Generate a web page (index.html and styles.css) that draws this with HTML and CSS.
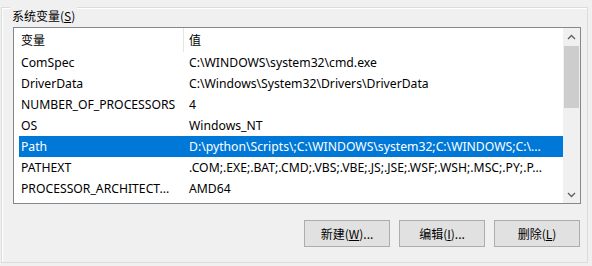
FILE: index.html
```html
<!DOCTYPE html>
<html>
<head>
<meta charset="utf-8">
<link rel="stylesheet" href="styles.css">
</head>
<body>
<div class="group">
  <div class="legend">系统变量(<u>S</u>)</div>
  <div class="listbox">
    <div class="list">
      <div class="header">
        <div class="hcell hname">变量</div>
        <div class="hcell hval">值</div>
      </div>
      <div class="row"><div class="cname">ComSpec</div><div class="cval">C:\WINDOWS\system32\cmd.exe</div></div>
      <div class="row"><div class="cname">DriverData</div><div class="cval">C:\Windows\System32\Drivers\DriverData</div></div>
      <div class="row"><div class="cname">NUMBER_OF_PROCESSORS</div><div class="cval">4</div></div>
      <div class="row"><div class="cname">OS</div><div class="cval">Windows_NT</div></div>
      <div class="row selected"><div class="cname">Path</div><div class="cval">D:\python\Scripts\;C:\WINDOWS\system32;C:\WINDOWS;C:\...</div></div>
      <div class="row"><div class="cname">PATHEXT</div><div class="cval">.COM;.EXE;.BAT;.CMD;.VBS;.VBE;.JS;.JSE;.WSF;.WSH;.MSC;.PY;.P...</div></div>
      <div class="row"><div class="cname">PROCESSOR_ARCHITECT...</div><div class="cval">AMD64</div></div>
    </div>
    <div class="scrollbar">
      <div class="arrow">
        <svg width="9" height="6" viewBox="0 0 9 6"><path d="M1 5 L4.5 1.5 L8 5" fill="none" stroke="#606060" stroke-width="1.4"/></svg>
      </div>
      <div class="track"><div class="thumb"></div></div>
      <div class="arrow">
        <svg width="9" height="6" viewBox="0 0 9 6"><path d="M1 1 L4.5 4.5 L8 1" fill="none" stroke="#606060" stroke-width="1.4"/></svg>
      </div>
    </div>
  </div>
  <div class="buttons">
    <div class="btn">新建(<u>W</u>)...</div>
    <div class="btn">编辑(<u>I</u>)...</div>
    <div class="btn">删除(<u>L</u>)</div>
  </div>
</div>
</body>
</html>
```
FILE: styles.css
```css
html, body {
  margin: 0;
  padding: 0;
  background: #f0f0f0;
}
body {
  width: 592px;
  height: 266px;
  overflow: hidden;
  font-family: "Noto Sans", "Noto Sans CJK SC", sans-serif;
  font-size: 12.2px;
  color: #000;
}
.group {
  margin: 7px 4px 0 1px;
  height: 254px;
  border: 1px solid #dcdcdc;
  box-shadow: inset 1px 1px 0 #ffffff;
  padding: 0 6px 0 11px;
}
.legend {
  display: inline-block;
  margin-top: -9px;
  margin-left: -3px;
  padding: 0 2px 0 2px;
  background: #f0f0f0;
  font-family: "Noto Sans CJK SC", sans-serif;
  font-size: 12px;
  line-height: 18px;
  height: 18px;
}
.listbox {
  margin-top: 2px;
  width: 566px;
  height: 175px;
  border: 1px solid #828790;
  background: #ffffff;
  display: flex;
}
.list {
  flex: 1;
  min-width: 0;
  overflow: hidden;
}
.header {
  display: flex;
  height: 24px;
  align-items: center;
}
.hcell {
  font-family: "Noto Sans CJK SC", sans-serif;
  font-size: 12px;
  line-height: 24px;
  height: 24px;
}
.hname {
  width: 162px;
  padding-left: 7px;
  border-right: 1px solid #e5e5e5;
}
.hval {
  padding-left: 5px;
}
.row {
  display: flex;
  height: 21px;
  line-height: 21px;
  margin-left: 5px;
  white-space: nowrap;
}
.row.selected {
  background: #0078d7;
  color: #ffffff;
}
.cname {
  width: 166px;
  padding-left: 2px;
  overflow: hidden;
}
.cval {
  padding-left: 2px;
  overflow: hidden;
  flex: 1;
  min-width: 0;
}
.scrollbar {
  width: 17px;
  background: #f0f0f0;
  display: flex;
  flex-direction: column;
}
.arrow {
  height: 17px;
  display: flex;
  align-items: center;
  justify-content: center;
}
.track {
  flex: 1;
  padding: 1px 1px 0 1px;
}
.thumb {
  height: 62px;
  background: #cdcdcd;
}
.buttons {
  display: flex;
  justify-content: flex-end;
  gap: 9px;
  margin-top: 16px;
  padding-right: 1px;
}
.btn {
  width: 84px;
  height: 25px;
  border: 1px solid #adadad;
  background: #e1e1e1;
  font-family: "Noto Sans CJK SC", sans-serif;
  font-size: 12px;
  line-height: 25px;
  text-align: center;
}
u {
  text-decoration: underline;
  text-underline-offset: 1px;
}
```
